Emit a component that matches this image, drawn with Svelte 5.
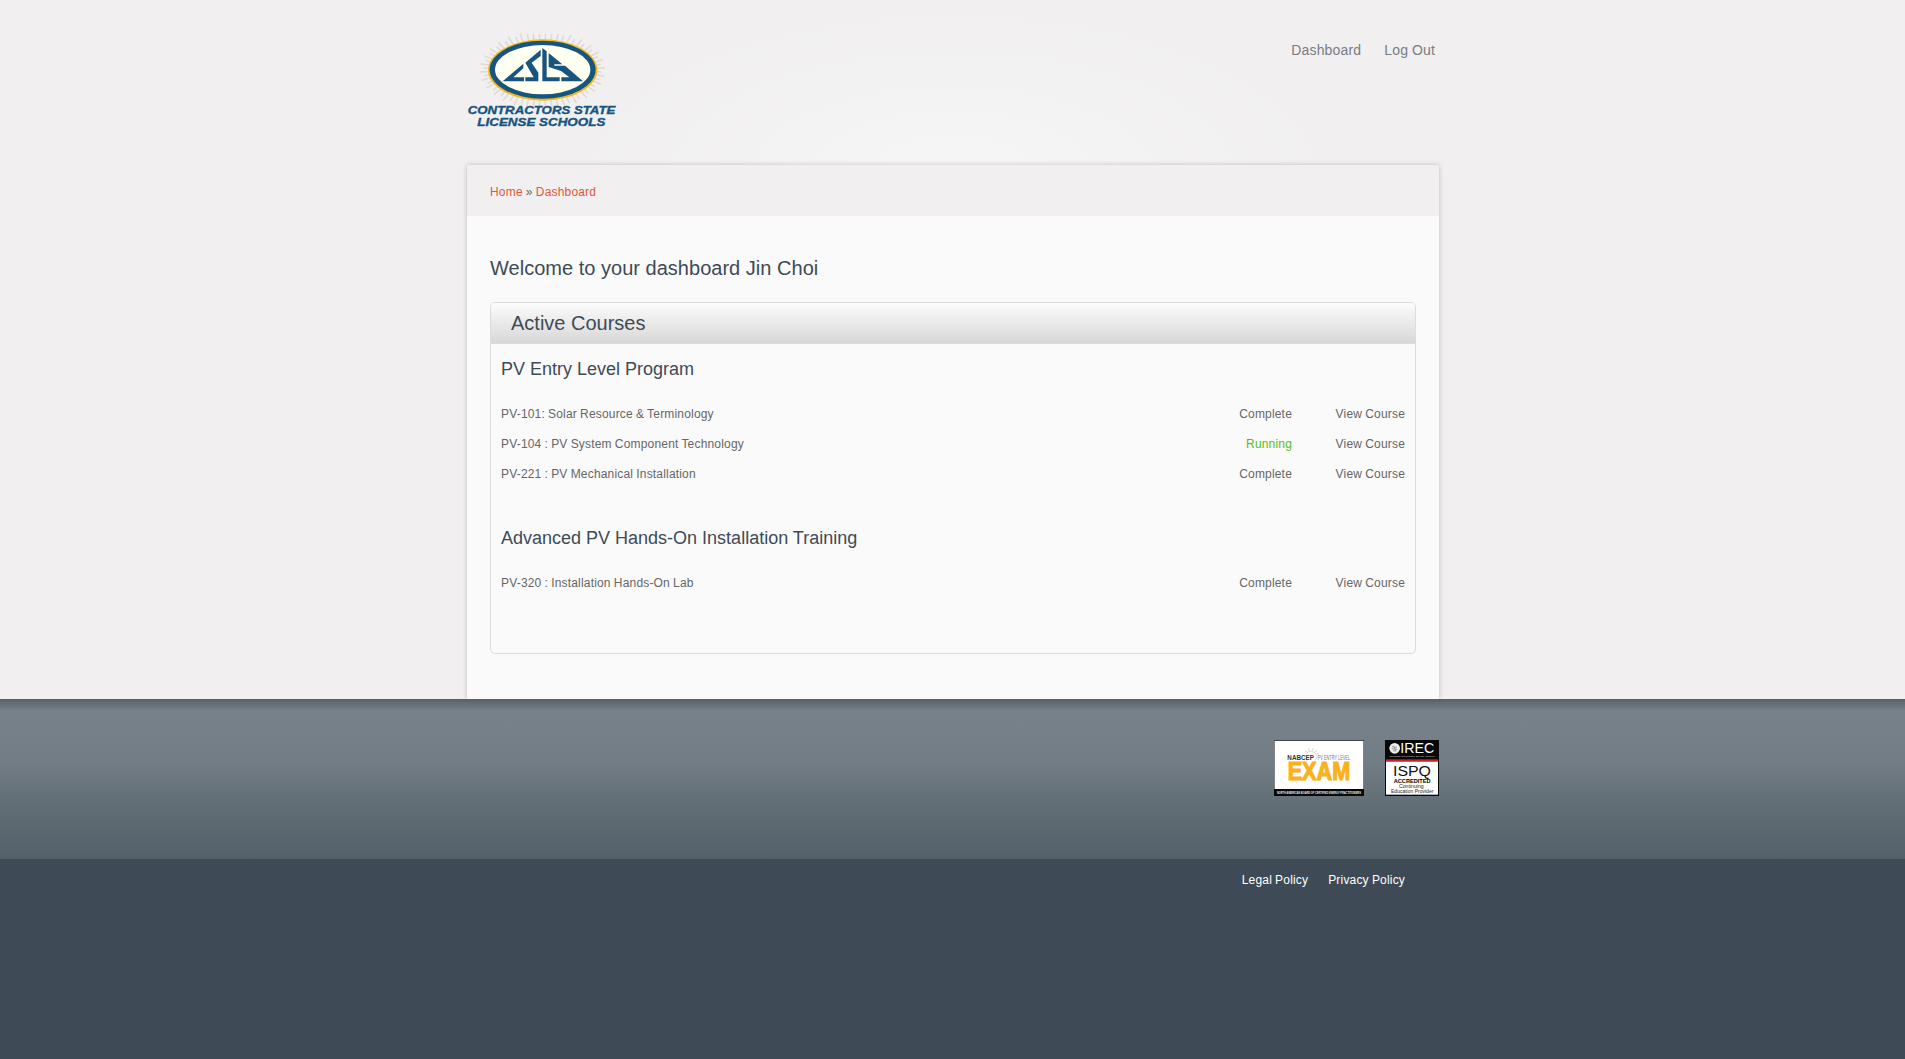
<script>
  const nav = ['Dashboard', 'Log Out'];
  const programs = [
    {
      title: 'PV Entry Level Program',
      courses: [
        { name: 'PV-101: Solar Resource & Terminology', status: 'Complete' },
        { name: 'PV-104 : PV System Component Technology', status: 'Running' },
        { name: 'PV-221 : PV Mechanical Installation', status: 'Complete' }
      ]
    },
    {
      title: 'Advanced PV Hands-On Installation Training',
      courses: [{ name: 'PV-320 : Installation Hands-On Lab', status: 'Complete' }]
    }
  ];

  // Sunburst rays behind the oval emblem
  const rays = Array.from({ length: 60 }, (_, i) => {
    const a = (i * 6 + 3) * (Math.PI / 180);
    const r = i % 2 ? 1 : 0.94;
    return {
      x1: 262.5 + Math.cos(a) * 155,
      y1: 150 + Math.sin(a) * 85,
      x2: 262.5 + Math.cos(a) * 188 * r,
      y2: 150 + Math.sin(a) * 118 * r
    };
  });
</script>

<div class="page">
  <div class="top">
    <header class="wrap">
      <svg class="logo" viewBox="36 42 450 285" role="img" aria-label="Contractors State License Schools">
        <g stroke="#dfd9d0" stroke-width="4.5">
          {#each rays as r}
            <line x1={r.x1} y1={r.y1} x2={r.x2} y2={r.y2} />
          {/each}
        </g>
        <ellipse cx="263" cy="150" rx="164" ry="92" fill="#f0b91f" />
        <ellipse cx="263" cy="149" rx="159" ry="87" fill="#17557f" />
        <ellipse cx="263" cy="149" rx="143" ry="74" fill="#fffff2" />
        <g fill="#17557f">
          <path d="M143 184L205 131V145L175 172H207V184Z" />
          <path d="M211 184V172H236L211 128L257 89V108L230 128L250 158V184Z" />
          <path d="M262 84L275 94V172H314V184H262Z" />
          <path d="M281 99L322 133H298V137H330L384 184H319V172H343L318 153L281 141Z" />
        </g>
        <g class="logo-text">
          <text x="38" y="282" textLength="443" lengthAdjust="spacingAndGlyphs">CONTRACTORS STATE</text>
          <text x="67" y="319" textLength="384" lengthAdjust="spacingAndGlyphs">LICENSE SCHOOLS</text>
        </g>
      </svg>
      <nav>
        {#each nav as item}<a href="#top">{item}</a>{/each}
      </nav>
    </header>

    <main class="wrap card">
      <div class="crumbs"><a href="#top">Home</a> » <a href="#top">Dashboard</a></div>
      <div class="content">
        <h1>Welcome to your dashboard Jin Choi</h1>
        <section class="panel">
          <h2>Active Courses</h2>
          {#each programs as p}
            <div class="program">
              <h3>{p.title}</h3>
              {#each p.courses as c}
                <div class="row">
                  <span class="name">{c.name}</span>
                  <span class="status" class:running={c.status === 'Running'}>{c.status}</span>
                  <a class="view" href="#top">View Course</a>
                </div>
              {/each}
            </div>
          {/each}
        </section>
      </div>
    </main>
  </div>

  <div class="partners">
    <div class="wrap badges">
      <svg class="nabcep" viewBox="0 0 270 168" role="img" aria-label="NABCEP PV Entry Level Exam">
        <rect width="270" height="168" fill="#444" />
        <rect x="2" y="3" width="266" height="144" fill="#fff" />
        <rect y="147" width="270" height="21" fill="#080808" />
        <g fill="none" stroke="#c9c9c9" stroke-width="2">
          <path d="M96 42A18 18 0 0 1 128 46Q130 54 123 61" />
          <path d="M94 32l5 5M104 26l2 6M117 25l-1 6M128 31l-4 5M134 41l-6 2" stroke-width="3" />
        </g>
        <text x="40" y="60" font-size="20" font-weight="bold" fill="#333" textLength="80" lengthAdjust="spacingAndGlyphs">NABCEP</text>
        <text transform="translate(131 60) scale(0.68 1)" font-size="19" fill="#777" textLength="143" lengthAdjust="spacingAndGlyphs">PV ENTRY LEVEL</text>
        <text class="exam" x="41" y="121" textLength="188" lengthAdjust="spacingAndGlyphs">EXAM</text>
        <text transform="translate(9 161) scale(0.68 1)" font-size="10" font-weight="bold" fill="#eee" textLength="370" lengthAdjust="spacingAndGlyphs">NORTH AMERICAN BOARD OF CERTIFIED ENERGY PRACTITIONERS</text>
      </svg>
      <svg class="irec" viewBox="0 0 162 168" role="img" aria-label="IREC ISPQ Accredited Continuing Education Provider">
        <rect width="162" height="168" fill="#080808" />
        <rect x="3" y="58" width="156" height="7" fill="#cf1f2e" />
        <rect x="3" y="65" width="156" height="99" fill="#fff" />
        <circle cx="29" cy="25" r="16" fill="#eee" />
        <path d="M21 20l15 2M20 26l17 2M24 32l10 1M26 17l6 16" stroke="#777" stroke-width="2" />
        <text x="46" y="40" font-size="45" fill="#fff" textLength="102" lengthAdjust="spacingAndGlyphs">IREC</text>
        <text x="13" y="51" font-size="7" fill="#ccc" textLength="136" lengthAdjust="spacingAndGlyphs">Interstate Renewable Energy Council</text>
        <text x="24" y="107" font-size="46" fill="#111" textLength="114" lengthAdjust="spacingAndGlyphs">ISPQ</text>
        <text x="26" y="129" font-size="15" font-weight="bold" fill="#000" textLength="111" lengthAdjust="spacingAndGlyphs">ACCREDITED</text>
        <text x="42" y="144" font-size="14" fill="#222" textLength="74" lengthAdjust="spacingAndGlyphs">Continuing</text>
        <text x="18" y="158" font-size="14" fill="#222" textLength="127" lengthAdjust="spacingAndGlyphs">Education Provider</text>
      </svg>
    </div>
  </div>

  <footer>
    <div class="wrap legal">
      <a href="#top">Legal Policy</a>
      <a href="#top">Privacy Policy</a>
    </div>
  </footer>
</div>

<style>
  :global(body) {
    margin: 0;
    background: #3e4a56;
  }
  .page {
    min-height: 1059px;
    display: flex;
    flex-direction: column;
    font: 12px/18px 'Liberation Sans', Arial, sans-serif;
    letter-spacing: 0.18px;
    word-spacing: -0.4px;
    color: #666;
  }
  a {
    color: inherit;
    text-decoration: none;
  }
  svg,
  h1, h2, h3 {
    letter-spacing: 0;
    word-spacing: 0;
  }
  h1, h2, h3 {
    margin: 0;
    font-weight: normal;
    color: #3e4a56;
  }
  .wrap {
    width: 972px;
    margin-left: calc((100% - 971px) / 2);
  }
  .top {
    height: 699px;
    overflow: hidden;
    background: radial-gradient(ellipse 400px 175px at 50% 175px, #f6f6f6, #f1eff0 100%) #f1eff0;
  }
  header {
    height: 165px;
    display: flex;
    justify-content: space-between;
    align-items: flex-start;
  }
  .logo {
    width: 150px;
    height: 95px;
    margin-top: 34px;
  }
  .logo-text {
    font-size: 31px;
    font-weight: bold;
    font-style: italic;
    fill: #17557f;
    stroke: #17557f;
    stroke-width: 1px;
  }
  nav {
    display: flex;
    gap: 23px;
    padding: 40px 4px 0 0;
    font-size: 14px;
    line-height: 20px;
    color: #787d82;
  }
  .card {
    height: 534px;
    border-radius: 3px 3px 0 0;
    background: #fafafa;
    box-shadow: 0 0 5px rgba(0, 0, 0, 0.22);
  }
  .crumbs {
    height: 33px;
    padding: 18px 23px 0;
    border-radius: 3px 3px 0 0;
    background: #f1eff0;
  }
  .crumbs a {
    color: #e2573b;
  }
  .content {
    padding: 39px 23px 0;
  }
  h1 {
    font-size: 20px;
    line-height: 26px;
    margin-bottom: 21px;
    letter-spacing: 0.02px;
  }
  .panel {
    height: 350px;
    border: 1px solid #dcdcdc;
    border-radius: 5px;
  }
  h2 {
    padding-left: 20px;
    margin-bottom: 13px;
    font-size: 20px;
    line-height: 40px;
    border-bottom: 1px solid #dcdcdc;
    border-radius: 4px 4px 0 0;
    background: linear-gradient(#fcfcfc, #d7d7d7);
  }
  .program {
    padding: 0 10px;
    margin-bottom: 37px;
  }
  h3 {
    font-size: 18px;
    line-height: 24px;
    margin-bottom: 18px;
  }
  .row {
    display: grid;
    grid-template-columns: 1fr 120px 113px;
    line-height: 30px;
  }
  .status, .view {
    text-align: right;
  }
  .running {
    color: #55bf17;
  }
  .partners {
    height: 160px;
    background:
      linear-gradient(rgba(70, 78, 82, 0.65), rgba(70, 78, 82, 0) 12px),
      linear-gradient(#79838c, #737d85 38%, #5f6c73 70%, #54616b);
  }
  .badges {
    display: flex;
    justify-content: flex-end;
    gap: 21px;
    padding-top: 41px;
  }
  .nabcep {
    width: 90px;
    height: 56px;
  }
  .irec {
    width: 54px;
    height: 56px;
  }
  .exam {
    font-size: 75px;
    font-weight: bold;
    fill: #fbb020;
    stroke: #fbb020;
    stroke-width: 3.5px;
    stroke-linejoin: miter;
  }
  footer {
    flex: 1;
    background: #3e4a56;
  }
  .legal {
    display: flex;
    justify-content: flex-end;
    gap: 20px;
    box-sizing: border-box;
    padding: 12px 34px 0 0;
    color: #fff;
  }
</style>
